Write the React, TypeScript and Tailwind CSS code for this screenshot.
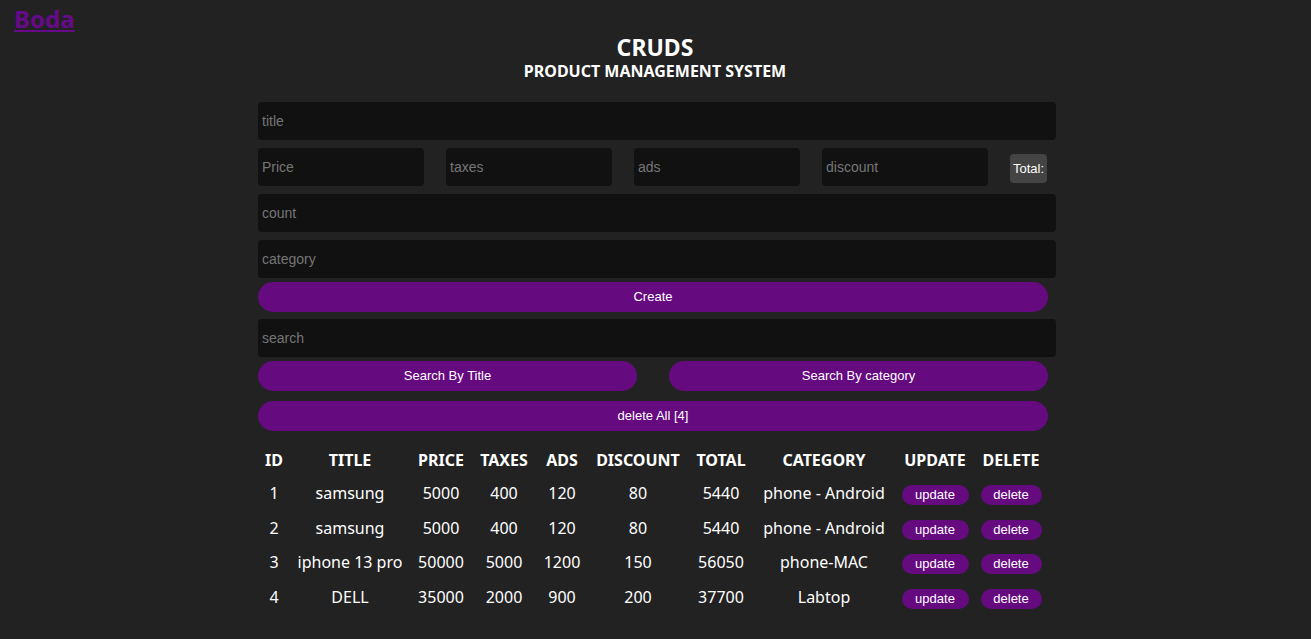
import React from "react";

const rows = [
  { id: 1, title: "samsung", price: 5000, taxes: 400, ads: 120, discount: 80, total: 5440, category: "phone - Android" },
  { id: 2, title: "samsung", price: 5000, taxes: 400, ads: 120, discount: 80, total: 5440, category: "phone - Android" },
  { id: 3, title: "iphone 13 pro", price: 50000, taxes: 5000, ads: 1200, discount: 150, total: 56050, category: "phone-MAC" },
  { id: 4, title: "DELL", price: 35000, taxes: 2000, ads: 900, discount: 200, total: 37700, category: "Labtop" },
];

const seg = { fontFamily: '"Noto Sans", "Open Sans", sans-serif' };
const arial = { fontFamily: '"Liberation Sans", Arial, sans-serif' };

function Field({ ph, cls }: { ph: string; cls: string }) {
  return (
    <input
      placeholder={ph}
      style={arial}
      className={`${cls} bg-[#111111] rounded-[4px] outline-none border-0 text-[14px] text-white placeholder:text-[#767676] pl-[4px]`}
    />
  );
}

export default function App() {
  const cols = ["w-[32px]", "w-[120px]", "w-[62px]", "w-[64px]", "w-[52px]", "w-[100px]", "w-[66px]", "w-[140px]", "w-[82px]", "w-[70px]"];
  const heads = ["ID", "TITLE", "PRICE", "TAXES", "ADS", "DISCOUNT", "TOTAL", "CATEGORY", "UPDATE", "DELETE"];
  return (
    <div className="min-h-[639px] w-full bg-[#222222] text-white" style={seg}>
      <div className="pl-[14px] pt-[2px] h-[34px]">
        <a href="#" className="text-[24px] font-bold text-[#660a8a] underline leading-[34px]">Boda</a>
      </div>
      <div className="flex justify-center pl-[3px]">
        <div className="w-[798px]">
          <div className="text-center pr-[4px]">
            <div className="text-[23px] font-bold leading-[26px]">CRUDS</div>
            <div className="text-[16px] font-bold leading-[20px] mt-[1px]">PRODUCT MANAGEMENT SYSTEM</div>
          </div>
          <div className="mt-[21px] flex flex-col">
            <Field ph="title" cls="w-full h-[38px]" />
            <div className="flex items-center gap-[22px] mt-[8px]">
              <Field ph="Price" cls="w-[166px] h-[38px]" />
              <Field ph="taxes" cls="w-[166px] h-[38px]" />
              <Field ph="ads" cls="w-[166px] h-[38px]" />
              <Field ph="discount" cls="w-[166px] h-[38px]" />
              <div style={arial} className="h-[29px] w-[37px] bg-[#444444] rounded-[4px] text-[13px] flex items-center justify-center mt-[3px]">Total:</div>
            </div>
            <Field ph="count" cls="w-full h-[38px] mt-[8px]" />
            <Field ph="category" cls="w-full h-[38px] mt-[8px]" />
            <button style={arial} className="w-[790px] h-[30px] mt-[4px] rounded-full bg-[#660a80] text-[13px] text-white">Create</button>
            <Field ph="search" cls="w-full h-[38px] mt-[7px]" />
            <div className="flex justify-between w-[790px] mt-[4px]">
              <button style={arial} className="w-[379px] h-[30px] rounded-full bg-[#660a80] text-[13px] text-white">Search By Title</button>
              <button style={arial} className="w-[379px] h-[30px] rounded-full bg-[#660a80] text-[13px] text-white">Search By category</button>
            </div>
            <button style={arial} className="w-[790px] h-[30px] mt-[10px] rounded-full bg-[#660a80] text-[13px] text-white">delete All [4]</button>
          </div>
          <table className="mt-[16px] border-collapse table-fixed text-[16px]">
            <thead>
              <tr className="h-[29px]">
                {heads.map((h, i) => (
                  <th key={h} className={`${cols[i]} text-center font-bold p-0 align-top pt-[1px]`}>{h}</th>
                ))}
              </tr>
            </thead>
            <tbody>
              {rows.map((r, idx) => (
                <tr key={idx} className="h-[34.5px]">
                  <td className="text-center">{r.id}</td>
                  <td className="text-center whitespace-nowrap">{r.title}</td>
                  <td className="text-center">{r.price}</td>
                  <td className="text-center">{r.taxes}</td>
                  <td className="text-center">{r.ads}</td>
                  <td className="text-center">{r.discount}</td>
                  <td className="text-center">{r.total}</td>
                  <td className="text-center whitespace-nowrap">{r.category}</td>
                  <td className="text-center">
                    <button style={arial} className="w-[67px] h-[20px] rounded-full bg-[#660a80] text-[13px] text-white leading-[20px]">update</button>
                  </td>
                  <td className="text-center">
                    <button style={arial} className="w-[61px] h-[20px] rounded-full bg-[#660a80] text-[13px] text-white leading-[20px]">delete</button>
                  </td>
                </tr>
              ))}
            </tbody>
          </table>
        </div>
      </div>
    </div>
  );
}
